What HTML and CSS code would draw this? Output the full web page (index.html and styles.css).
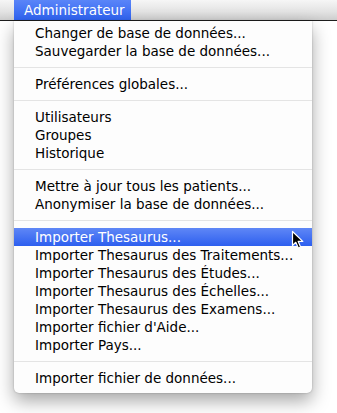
FILE: index.html
```html
<!DOCTYPE html>
<html lang="fr">
<head>
<meta charset="utf-8">
<link rel="stylesheet" href="styles.css">
</head>
<body>
<div class="menubar">
  <span class="title">Administrateur</span>
</div>
<div class="menu">
  <div class="item">Changer de base de données...</div>
  <div class="item">Sauvegarder la base de données...</div>
  <div class="sep"></div>
  <div class="item">Préférences globales...</div>
  <div class="sep"></div>
  <div class="item">Utilisateurs</div>
  <div class="item">Groupes</div>
  <div class="item">Historique</div>
  <div class="sep"></div>
  <div class="item">Mettre à jour tous les patients...</div>
  <div class="item">Anonymiser la base de données...</div>
  <div class="sep"></div>
  <div class="item active">Importer Thesaurus...
    <svg class="cursor" width="14" height="20" viewBox="0 0 14 20"><path d="M1.5 1.5 L1.5 15.5 L4.8 12.3 L7.3 18 L9.6 17 L7.2 11.4 L11.8 11.4 Z" fill="#000" stroke="#fff" stroke-width="1.2" stroke-linejoin="round"/></svg>
  </div>
  <div class="item">Importer Thesaurus des Traitements...</div>
  <div class="item">Importer Thesaurus des Études...</div>
  <div class="item">Importer Thesaurus des Échelles...</div>
  <div class="item">Importer Thesaurus des Examens...</div>
  <div class="item">Importer fichier d'Aide...</div>
  <div class="item">Importer Pays...</div>
  <div class="sep"></div>
  <div class="item">Importer fichier de données...</div>
</div>
</body>
</html>
```
FILE: styles.css
```css
html, body {
  margin: 0;
  padding: 0;
  background: #ffffff;
}
body {
  width: 337px;
  height: 413px;
  overflow: hidden;
  font-family: "DejaVu Sans", "Liberation Sans", sans-serif;
  font-size: 13.5px;
  color: #000;
}
.menubar {
  height: 21px;
  box-sizing: border-box;
  background: linear-gradient(#f6f6f6, #e2e2e2 60%, #cdcdcd);
  border-bottom: 1px solid #1e1e1e;
  padding-left: 14px;
  display: flex;
}
.title {
  display: block;
  height: 20px;
  line-height: 20px;
  padding: 0 10px;
  width: 97px;
  background: linear-gradient(#5a85f8, #2f63f1);
  color: #fff;
  font-size: 13.5px;
}
.menu {
  margin-left: 14px;
  width: 298px;
  height: 372px;
  box-sizing: border-box;
  background: #fdfdfd;
  padding: 3px 0 6px;
  border-radius: 0 0 5px 5px;
  box-shadow: 0 8px 18px rgba(0,0,0,0.35), 0 0 2px rgba(0,0,0,0.25);
  position: relative;
}
.item {
  height: 18px;
  line-height: 18px;
  padding-left: 21px;
  white-space: nowrap;
  position: relative;
}
.item.active {
  background: linear-gradient(#5f87f6, #2d5fef);
  color: #fff;
}
.sep {
  height: 1px;
  margin: 7px 0;
  background: #e4e4e4;
}
.cursor {
  position: absolute;
  left: 277px;
  top: 2px;
}
```
